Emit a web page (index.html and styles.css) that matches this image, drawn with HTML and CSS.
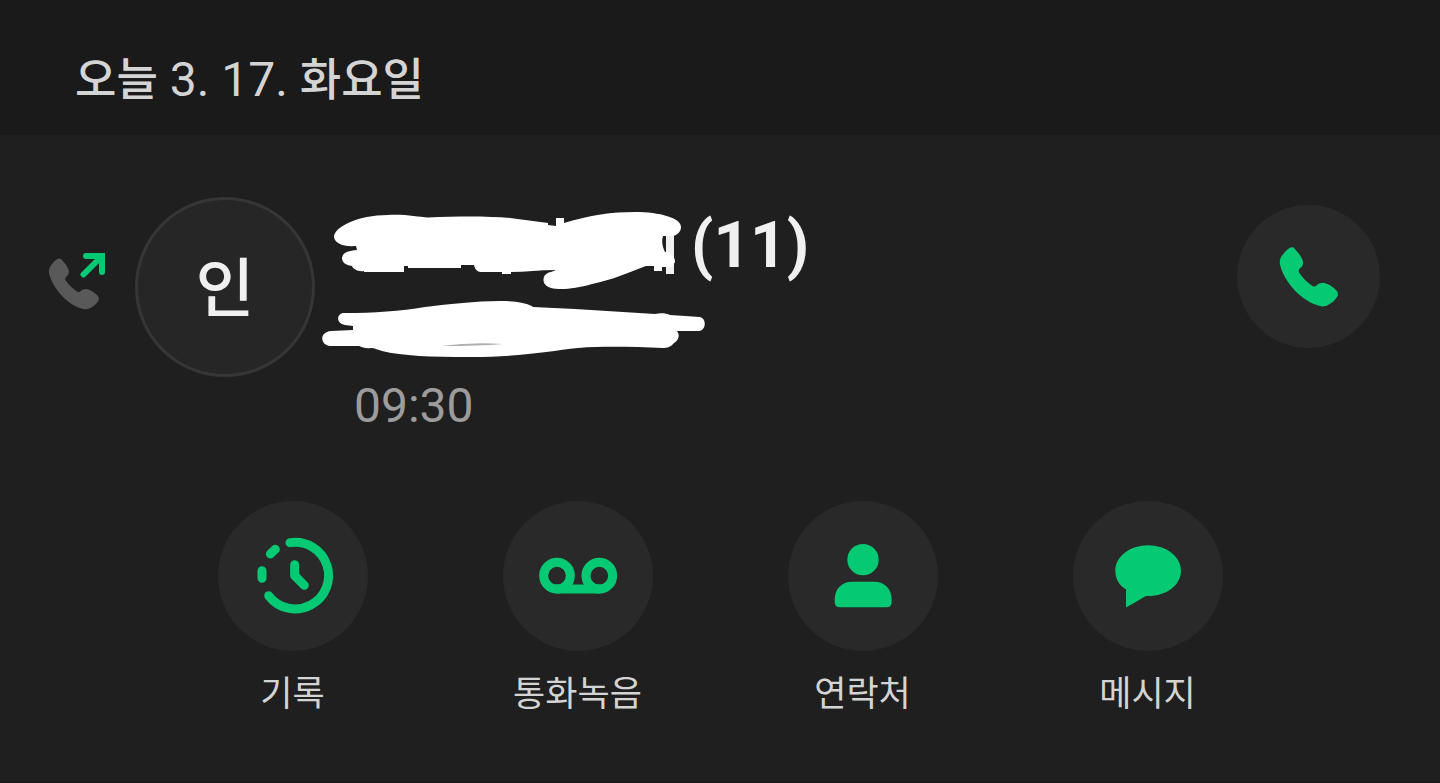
FILE: index.html
```html
<!DOCTYPE html>
<html lang="ko">

<head>
  <meta charset="UTF-8">
  <meta name="viewport" content="width=device-width, initial-scale=1.0">
  <title>최근 통화</title>
  <link rel="stylesheet" href="styles.css">
</head>

<body>
  <!-- shared phone shape -->
  <svg class="sprite" aria-hidden="true">
    <symbol id="phone" viewBox="144 152 184 186">
      <path d="M176 156C180 153 188 153 192 158C202 168 212 182 217 195C219 203 217 211 211 216L207 220C204 224 204 228 206 232C216 248 232 263 248 273C252 275 256 274 259 271C264 266 272 263 280 263C294 265 308 274 321 287C325 291 326 299 323 305C316 317 303 328 290 333C283 335 276 336 270 334C215 322 160 262 147 207C145 194 148 186 154 178C160 170 168 162 176 156Z" />
    </symbol>
  </svg>

  <header class="date-header">
    <h1><span class="ko">오늘</span> 3. 17. <span class="ko">화요일</span></h1>
  </header>

  <main class="call-log">
    <section class="call">
      <svg class="call-type" viewBox="48 250 60 62" role="img" aria-label="발신">
        <use class="handset" href="#phone" x="48" y="258" width="52" height="52" />
        <path class="arrow" d="M83.500 274.500L101 257M86 256H102V272" />
      </svg>

      <div class="avatar">인</div>

      <div class="details">
        <div class="name">
          <svg class="name-cover" viewBox="322 208 360 84" aria-hidden="true">
            <path class="letter" d="M666 232H674V274H666Z" />
            <path d="M334 237C334 227 358 215 388 215C405 214 418 217 428 217.500C460 216 488 216 510 218L548 223V225L556 226V218H564V223C590 215 612 212 635 212C660 212 681 218 681 227C681 232 677 235 673 236H663C661 242 663 248 665 252C672 253 675 257 675 262C674 265 671 267 668 267H662V271H654V266H646C630 272 612 280 592 284C575 289 560 290 551 288C540 285 542 273 551 272L556 270C540 270 525 272 511 272V274H502V272H481C477 272 475 269 474 265H461V268H408V266H404V272H364V271C358 272 353 269 352 266C345 265 342 262 342 258C343 252 348 251 357 250L356 246C342 247 335 243 334 237Z" />
          </svg>
          <span class="count">(11)</span>
        </div>
        <svg class="number-cover" viewBox="322 298 384 62" aria-hidden="true">
          <path d="M344 313C375 313 400 311 425 307C450 304 475 301 500 301C518 301 530 304 533 307L575 309L655 314C660 313 666 313 670 315L700 317C707 319 706 330 699 331H677C680 335 679 340 674 343C671 347 667 348 663 348C635 347 605 346 578 348C550 351 520 357 470 357C432 357 402 356 382 351C378 350 375 348 371 348C366 349 362 347 359 346H330C320 345 319 332 331 331L353 330V326L345 325C335 323 337 313 344 313Z" />
          <path class="smear" d="M441 346Q472 342 503 344Q480 346 441 346Z" />
        </svg>
        <time class="time" datetime="09:30">09:30</time>
      </div>

      <button class="call-button" type="button" aria-label="전화 걸기">
        <svg viewBox="0 0 60 62"><use href="#phone" width="60" height="62" /></svg>
      </button>
    </section>

    <nav class="actions">
      <button class="action" type="button">
        <svg class="action-icon" viewBox="24 35 450 450" aria-hidden="true">
          <path class="line" d="M240 160A100 100 0 1 1 176 319M181 194L196 180M156 244V267M254 226V259L283 288" />
        </svg>
        <span>기록</span>
      </button>
      <button class="action" type="button">
        <svg class="action-icon" viewBox="24 35 450 450" aria-hidden="true">
          <circle class="line" cx="186" cy="259" r="40" />
          <circle class="line" cx="313" cy="259" r="40" />
          <path class="line" d="M186 299H313" />
        </svg>
        <span>통화녹음</span>
      </button>
      <button class="action" type="button">
        <svg class="action-icon" viewBox="24 35 450 450" aria-hidden="true">
          <circle cx="249" cy="211" r="47" />
          <path d="M164 331C164 299 185 277 216 277H283C314 277 335 299 335 331V338Q335 354 319 354H180Q164 354 164 338Z" />
        </svg>
        <span>연락처</span>
      </button>
      <button class="action" type="button">
        <svg class="action-icon" viewBox="24 35 450 450" aria-hidden="true">
          <path d="M183 300C162 288 151 267 151 244C151 202 195 168 249 168C304 168 348 202 348 244C348 287 304 322 243 320L186 353Q183 355 183 351Z" />
        </svg>
        <span>메시지</span>
      </button>
    </nav>
  </main>
</body>

</html>
```
FILE: styles.css
```css
* {
  margin: 0;
  padding: 0;
  box-sizing: border-box;
}

body {
  min-height: 100vh;
  background-color: #1f1f1f;
  color: #d4d4d4;
  font-family: Roboto, "Noto Sans CJK KR", sans-serif;
}

svg {
  display: block;
  flex-shrink: 0;
}

button {
  border: none;
  background: none;
  color: inherit;
  font: inherit;
  cursor: pointer;
}

.sprite {
  position: absolute;
  width: 0;
  height: 0;
}

.date-header {
  padding: 48px 75px 22px;
  background-color: #1a1a1a;
}

.date-header h1 {
  font-size: 48px;
  font-weight: 400;
  line-height: 64px;
}

.date-header .ko {
  font-size: 45px;
  font-weight: 500;
}

.call-log {
  padding-top: 62px;
  border-bottom: 2px solid #1a1a1a;
}

.call {
  display: flex;
  align-items: flex-start;
  padding: 0 60px 0 48px;
}

.call-type {
  width: 60px;
  height: 62px;
  margin: 53px 27px 0 0;
}

.handset {
  fill: #595959;
}

.arrow {
  fill: none;
  stroke: #06c974;
  stroke-width: 6;
  stroke-linecap: round;
}

.avatar {
  display: flex;
  align-items: center;
  justify-content: center;
  flex-shrink: 0;
  width: 180px;
  height: 180px;
  padding-bottom: 8px;
  border: 3px solid #363636;
  border-radius: 50%;
  background-color: #262626;
  color: #f0f0f0;
  font-size: 64px;
  font-weight: 500;
}

.details {
  flex: 1;
  padding: 11px 0 0 7px;
}

.name {
  display: flex;
  gap: 9px;
}

.name-cover {
  width: 360px;
  height: 84px;
  fill: #fff;
}

.name-cover .letter {
  fill: #f0f0f0;
}

.count {
  color: #f0f0f0;
  font-size: 64px;
  font-weight: 700;
  line-height: 76px;
}

.number-cover {
  width: 384px;
  height: 62px;
  margin-top: 6px;
  fill: #fff;
}

.smear {
  fill: #b0b0b0;
}

.time {
  display: block;
  margin: 18px 0 0 32px;
  color: #9c9c9c;
  font-size: 48px;
  line-height: 56px;
}

.call-button {
  display: flex;
  align-items: center;
  justify-content: center;
  flex-shrink: 0;
  width: 143px;
  height: 143px;
  margin-top: 8px;
  border-radius: 50%;
  background-color: #292929;
}

.call-button svg {
  width: 60px;
  height: 62px;
  fill: #06c974;
}

.actions {
  display: grid;
  grid-template-columns: repeat(4, 1fr);
  margin-top: 67px;
  padding: 0 150px 64px;
}

.action {
  display: flex;
  flex-direction: column;
  align-items: center;
  gap: 22px;
  font-size: 35px;
  line-height: 44px;
}

.action-icon {
  width: 150px;
  height: 150px;
  border-radius: 50%;
  background-color: #292929;
  fill: #06c974;
}

.action-icon .line {
  fill: none;
  stroke: #06c974;
  stroke-width: 27;
  stroke-linecap: round;
  stroke-linejoin: round;
}
```
